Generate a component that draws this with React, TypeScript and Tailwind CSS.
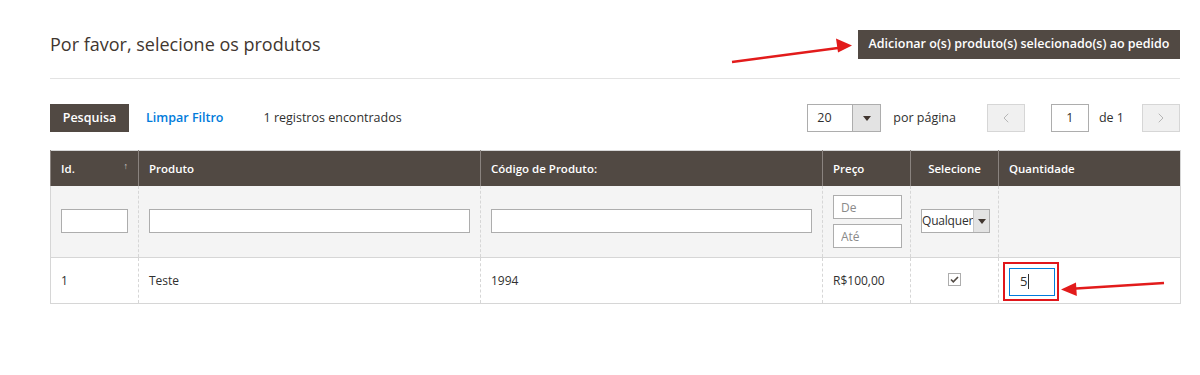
import { ChevronLeft, ChevronRight } from "lucide-react";

const font = { fontFamily: '"Open Sans", "Liberation Sans", sans-serif' };

function Caret() {
  return (
    <svg width="8" height="5" viewBox="0 0 8 5">
      <path d="M0 0h8L4 5z" fill="#41362f" />
    </svg>
  );
}

function FilterInput({ className = "", placeholder }: { className?: string; placeholder?: string }) {
  return (
    <input
      placeholder={placeholder}
      className={`h-[24px] border border-[#adadad] bg-white px-[7px] text-[12px] text-[#303030] placeholder:text-[#8a8a8a] outline-none ${className}`}
    />
  );
}

export default function App() {
  return (
    <div className="relative w-[1200px] h-[375px] overflow-hidden bg-white text-[#303030]" style={font}>
      <div className="pl-[50px] pr-[20px] pt-[30px]">
        {/* header */}
        <div className="flex items-center justify-between h-[29px]">
          <h1 className="text-[18px] text-[#41362f] leading-none -mt-[2px]">Por favor, selecione os produtos</h1>
          <button className="h-[29px] w-[322px] bg-[#514943] text-white text-[12.5px] font-semibold whitespace-nowrap">
            Adicionar o(s) produto(s) selecionado(s) ao pedido
          </button>
        </div>
        <div className="mt-[19px] border-t border-[#e3e3e3]" />

        {/* toolbar */}
        <div className="mt-[25px] flex items-center h-[28px] text-[12.5px]">
          <button className="h-[28px] w-[79px] bg-[#514943] text-white font-semibold">Pesquisa</button>
          <span className="ml-[17px] font-semibold text-[#007bdb]">Limpar Filtro</span>
          <span className="ml-[40px]">1 registros encontrados</span>
          <div className="ml-auto flex items-center">
            <div className="flex h-[28px] w-[74px] border border-[#adadad]">
              <span className="flex-1 flex items-center pl-[9px]">20</span>
              <span className="w-[28px] flex items-center justify-center bg-[#e3e3e3] border-l border-[#adadad]">
                <Caret />
              </span>
            </div>
            <span className="ml-[12px]">por página</span>
            <button className="ml-[31px] h-[28px] w-[38px] flex items-center justify-center bg-[#f0f0f0] border border-[#d6d6d6]">
              <ChevronLeft size={16} strokeWidth={1.3} color="#adadad" />
            </button>
            <div className="ml-[26px] h-[28px] w-[38px] border border-[#adadad] flex items-center justify-center">1</div>
            <span className="ml-[10px]">de 1</span>
            <button className="ml-[18px] h-[28px] w-[38px] flex items-center justify-center bg-[#f0f0f0] border border-[#d6d6d6]">
              <ChevronRight size={16} strokeWidth={1.3} color="#adadad" />
            </button>
          </div>
        </div>

        {/* grid */}
        <table className="mt-[18px] w-[1130px] table-fixed border-collapse border border-[#d6d6d6] text-[12px]">
          <colgroup>
            <col className="w-[88px]" />
            <col className="w-[342px]" />
            <col className="w-[342px]" />
            <col className="w-[88px]" />
            <col className="w-[88px]" />
            <col className="w-[182px]" />
          </colgroup>
          <thead>
            <tr className="h-[35px] bg-[#514943] text-white text-left text-[11.5px]">
              <th className="relative px-[10px] font-semibold border-l border-[#8a837f]">
                Id.
                <span className="absolute right-[10px] top-[8px] text-[9px] font-normal text-[#cfcac6]">↑</span>
              </th>
              <th className="px-[10px] font-semibold border-l border-[#8a837f]">Produto</th>
              <th className="px-[10px] font-semibold border-l border-[#8a837f]">Código de Produto:</th>
              <th className="px-[10px] font-semibold border-l border-[#8a837f]">Preço</th>
              <th className="px-[10px] font-semibold border-l border-[#8a837f] text-center">Selecione</th>
              <th className="px-[10px] font-semibold border-l border-[#8a837f]">Quantidade</th>
            </tr>
          </thead>
          <tbody>
            <tr className="h-[72px] bg-[#f4f4f4] border-b border-[#d6d6d6]">
              <td className="px-[10px]"><FilterInput className="w-full" /></td>
              <td className="px-[10px] border-l border-dashed border-[#d6d6d6]"><FilterInput className="w-full" /></td>
              <td className="px-[10px] border-l border-dashed border-[#d6d6d6]"><FilterInput className="w-full" /></td>
              <td className="px-[10px] border-l border-dashed border-[#d6d6d6]">
                <div className="flex flex-col gap-[5px] pt-[1px]">
                  <FilterInput className="w-[69px]" placeholder="De" />
                  <FilterInput className="w-[69px]" placeholder="Até" />
                </div>
              </td>
              <td className="px-[10px] border-l border-dashed border-[#d6d6d6]">
                <div className="flex h-[24px] w-[69px] border border-[#adadad] bg-white">
                  <span className="flex-1 whitespace-nowrap text-[12px] tracking-[-0.2px] leading-[22px]">Qualquer</span>
                  <span className="w-[16px] shrink-0 flex items-center justify-center bg-[#e3e3e3] border-l border-[#c8c8c8]">
                    <Caret />
                  </span>
                </div>
              </td>
              <td className="px-[10px] border-l border-dashed border-[#d6d6d6]" />
            </tr>
            <tr className="h-[46px] bg-white">
              <td className="px-[10px]">1</td>
              <td className="px-[10px] border-l border-dashed border-[#d6d6d6]">Teste</td>
              <td className="px-[10px] border-l border-dashed border-[#d6d6d6]">1994</td>
              <td className="px-[10px] border-l border-dashed border-[#d6d6d6]">R$100,00</td>
              <td className="px-[10px] border-l border-dashed border-[#d6d6d6]">
                <div className="mx-auto -mt-[2px] w-[13px] h-[13px] border border-[#adadad] bg-white flex items-center justify-center">
                  <svg width="9" height="7" viewBox="0 0 9 7">
                    <path d="M1 3.5l2.3 2.3L8 1" fill="none" stroke="#514943" strokeWidth="1.6" />
                  </svg>
                </div>
              </td>
              <td className="pl-[4px] border-l border-dashed border-[#d6d6d6]">
                <div className="w-[56px] h-[39px] border-2 border-[#e0161b] p-[4px] mt-[1px]">
                  <div className="w-[46px] h-[28px] border border-[#007bdb] bg-white flex items-center pl-[10px] text-[13px]">
                    5<span className="ml-[1px] w-px h-[15px] bg-[#303030]" />
                  </div>
                </div>
              </td>
            </tr>
          </tbody>
        </table>
      </div>

      {/* annotation arrows */}
      <svg className="absolute left-0 top-0 pointer-events-none" width="1200" height="375">
        <line x1="732" y1="62" x2="838" y2="48" stroke="#e21b1b" strokeWidth="2.5" />
        <path d="M852 45.5l-16 -7 2 14z" fill="#e21b1b" />
        <line x1="1164" y1="283" x2="1076" y2="288.5" stroke="#e21b1b" strokeWidth="2.5" />
        <path d="M1061 289.5l15 -7 0.8 13.5z" fill="#e21b1b" />
      </svg>
    </div>
  );
}
